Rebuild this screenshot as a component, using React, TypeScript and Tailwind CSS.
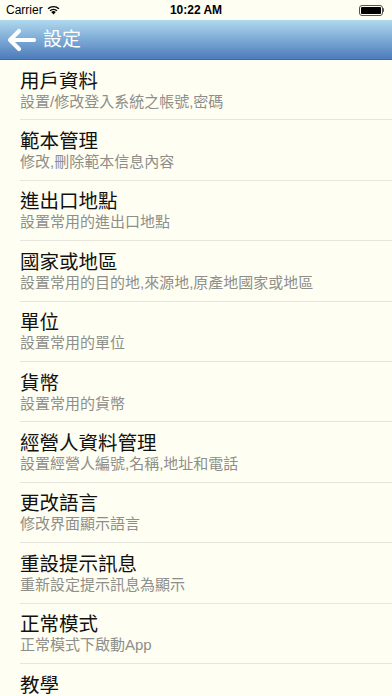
import React from "react";

const items = [
  { title: "用戶資料", sub: "設置/修改登入系統之帳號,密碼" },
  { title: "範本管理", sub: "修改,刪除範本信息內容" },
  { title: "進出口地點", sub: "設置常用的進出口地點" },
  { title: "國家或地區", sub: "設置常用的目的地,來源地,原產地國家或地區" },
  { title: "單位", sub: "設置常用的單位" },
  { title: "貨幣", sub: "設置常用的貨幣" },
  { title: "經營人資料管理", sub: "設置經營人編號,名稱,地址和電話" },
  { title: "更改語言", sub: "修改界面顯示語言" },
  { title: "重設提示訊息", sub: "重新設定提示訊息為顯示" },
  { title: "正常模式", sub: "正常模式下啟動App" },
  { title: "教學", sub: "使用教學" },
];

const font = {
  fontFamily: '"Liberation Sans", "Noto Sans CJK TC", sans-serif',
};

const App = () => {
  return (
    <div className="w-[392px] h-[696px] overflow-hidden bg-[#fefef2] flex flex-col" style={font}>
      {/* status bar */}
      <div className="h-5 flex items-center justify-between px-[6px] text-[12px] text-black shrink-0">
        <div className="flex items-center gap-1">
          <span>Carrier</span>
          <svg width="13" height="10" viewBox="0 0 13 10">
            <path d="M6.5 9.5 L4.2 7 A3.3 3.3 0 0 1 8.8 7 Z" fill="#000" />
            <path d="M2.6 5.3 A5.6 5.6 0 0 1 10.4 5.3 L9.4 6.3 A4.2 4.2 0 0 0 3.6 6.3 Z" fill="#000" />
            <path d="M0.6 3.3 A8.5 8.5 0 0 1 12.4 3.3 L11.4 4.3 A7.1 7.1 0 0 0 1.6 4.3 Z" fill="#000" />
          </svg>
        </div>
        <span className="font-bold absolute left-1/2 -translate-x-1/2">10:22 AM</span>
        <div className="flex items-center mr-[2px]">
          <div className="w-[24px] h-[11px] rounded-[3px] border border-[#555] p-[1px]">
            <div className="w-full h-full bg-black rounded-[1px]" />
          </div>
          <div className="w-[1.5px] h-[4px] bg-[#555] rounded-r" />
        </div>
      </div>

      {/* nav bar */}
      <div className="h-10 shrink-0 flex items-center bg-gradient-to-b from-[#b0d9ee] to-[#4c7cbb] border-b border-[#3d6aa3]">
        <svg width="32" height="24" viewBox="0 0 32 24" className="ml-[5px]">
          <path d="M29 12 H5 M14 3 L5 12 L14 21" stroke="#fff" strokeWidth="4.2" strokeLinecap="round" strokeLinejoin="round" fill="none" />
        </svg>
        <span className="ml-[6px] text-[19px] text-white leading-none">設定</span>
      </div>

      {/* list */}
      <div className="flex flex-col">
        {items.map((it, i) => (
          <div key={i} className="pl-5">
            <div className={"h-[60.4px] flex flex-col justify-center " + (i < items.length - 1 ? "border-b border-[#e6e6dc]" : "")}>
              <div className="text-[19.5px] leading-[24px] text-[#111]">{it.title}</div>
              <div className="text-[15px] leading-[18px] text-[#8e8e8a]">{it.sub}</div>
            </div>
          </div>
        ))}
      </div>
    </div>
  );
};

export default App;
